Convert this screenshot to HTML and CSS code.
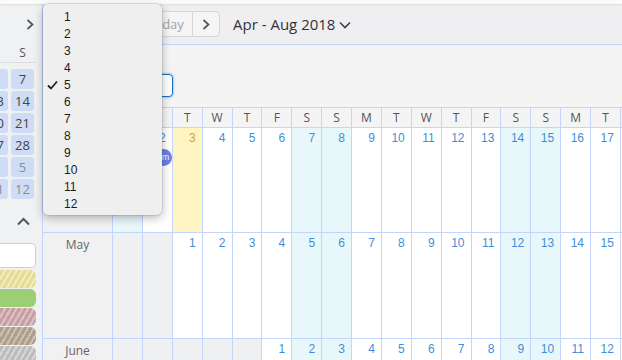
FILE: index.html
```html
<!DOCTYPE html>
<html>
<head>
<meta charset="utf-8">
<link rel="stylesheet" href="styles.css">
</head>
<body>
<div class="topstrip"></div>
<div class="app">
  <aside class="sidebar">
    <div class="mini-nav">
      <svg width="8" height="11" viewBox="0 0 8 11"><polyline points="1.5,1 6.5,5.5 1.5,10" fill="none" stroke="#555" stroke-width="1.7"/></svg>
    </div>
    <div class="mini-head"><span>F</span><span>S</span></div>
    <div class="mini-grid">
      <span class="d">6</span><span class="d">7</span>
      <span class="d">13</span><span class="d">14</span>
      <span class="d">20</span><span class="d">21</span>
      <span class="d">27</span><span class="d">28</span>
      <span class="d next">4</span><span class="d next">5</span>
      <span class="d next">11</span><span class="d next">12</span>
    </div>
    <div class="collapse">
      <svg width="13" height="9" viewBox="0 0 13 9"><polyline points="1,7.5 6.5,2 12,7.5" fill="none" stroke="#555" stroke-width="2"/></svg>
    </div>
    <div class="search"></div>
    <div class="cal-list">
      <div class="cal c-yellow"></div>
      <div class="cal c-green"></div>
      <div class="cal c-pink"></div>
      <div class="cal c-brown"></div>
      <div class="cal c-gray"></div>
    </div>
  </aside>

  <main class="main">
    <div class="toolbar">
      <div class="btn-group">
        <div class="btn prev"><svg width="8" height="11" viewBox="0 0 8 11"><polyline points="6.5,1 1.5,5.5 6.5,10" fill="none" stroke="#555" stroke-width="1.7"/></svg></div>
        <div class="btn today-btn">Today</div>
        <div class="btn next-btn"><svg width="8" height="11" viewBox="0 0 8 11"><polyline points="1.5,1 6.5,5.5 1.5,10" fill="none" stroke="#555" stroke-width="1.7"/></svg></div>
      </div>
      <div class="title">Apr - Aug 2018</div>
      <svg class="title-chev" width="12" height="8" viewBox="0 0 12 8"><polyline points="1,1.5 6,6.5 11,1.5" fill="none" stroke="#444" stroke-width="1.6"/></svg>
    </div>
    <div class="subbar">
      <div class="select"></div>
    </div>
    <div class="grid">
      <div class="h"></div>
      <div class="h">S</div><div class="h">M</div><div class="h">T</div><div class="h">W</div><div class="h">T</div><div class="h">F</div><div class="h">S</div>
      <div class="h">S</div><div class="h">M</div><div class="h">T</div><div class="h">W</div><div class="h">T</div><div class="h">F</div><div class="h">S</div>
      <div class="h">S</div><div class="h">M</div><div class="h">T</div><div class="h">W</div>

      <div class="lab">April</div>
      <div class="c we"><div class="n">1</div></div>
      <div class="c"><div class="n">2</div><div class="badge">Jm</div></div>
      <div class="c today"><div class="n">3</div></div>
      <div class="c"><div class="n">4</div></div>
      <div class="c"><div class="n">5</div></div>
      <div class="c"><div class="n">6</div></div>
      <div class="c we"><div class="n">7</div></div>
      <div class="c we"><div class="n">8</div></div>
      <div class="c"><div class="n">9</div></div>
      <div class="c"><div class="n">10</div></div>
      <div class="c"><div class="n">11</div></div>
      <div class="c"><div class="n">12</div></div>
      <div class="c"><div class="n">13</div></div>
      <div class="c we"><div class="n">14</div></div>
      <div class="c we"><div class="n">15</div></div>
      <div class="c"><div class="n">16</div></div>
      <div class="c"><div class="n">17</div></div>
      <div class="c"><div class="n">18</div></div>

      <div class="lab">May</div>
      <div class="c empty"></div>
      <div class="c empty"></div>
      <div class="c"><div class="n">1</div></div>
      <div class="c"><div class="n">2</div></div>
      <div class="c"><div class="n">3</div></div>
      <div class="c"><div class="n">4</div></div>
      <div class="c we"><div class="n">5</div></div>
      <div class="c we"><div class="n">6</div></div>
      <div class="c"><div class="n">7</div></div>
      <div class="c"><div class="n">8</div></div>
      <div class="c"><div class="n">9</div></div>
      <div class="c"><div class="n">10</div></div>
      <div class="c"><div class="n">11</div></div>
      <div class="c we"><div class="n">12</div></div>
      <div class="c we"><div class="n">13</div></div>
      <div class="c"><div class="n">14</div></div>
      <div class="c"><div class="n">15</div></div>
      <div class="c"><div class="n">16</div></div>

      <div class="lab">June</div>
      <div class="c empty"></div>
      <div class="c empty"></div>
      <div class="c empty"></div>
      <div class="c empty"></div>
      <div class="c empty"></div>
      <div class="c"><div class="n">1</div></div>
      <div class="c we"><div class="n">2</div></div>
      <div class="c we"><div class="n">3</div></div>
      <div class="c"><div class="n">4</div></div>
      <div class="c"><div class="n">5</div></div>
      <div class="c"><div class="n">6</div></div>
      <div class="c"><div class="n">7</div></div>
      <div class="c"><div class="n">8</div></div>
      <div class="c we"><div class="n">9</div></div>
      <div class="c we"><div class="n">10</div></div>
      <div class="c"><div class="n">11</div></div>
      <div class="c"><div class="n">12</div></div>
      <div class="c"><div class="n">13</div></div>
    </div>
  </main>
</div>

<div class="menu">
  <div class="item"><span class="chk"></span>1</div>
  <div class="item"><span class="chk"></span>2</div>
  <div class="item"><span class="chk"></span>3</div>
  <div class="item"><span class="chk"></span>4</div>
  <div class="item"><span class="chk"><svg width="11" height="10" viewBox="0 0 11 10"><polyline points="1,5.5 4,8.5 10,1.5" fill="none" stroke="#222" stroke-width="1.8"/></svg></span>5</div>
  <div class="item"><span class="chk"></span>6</div>
  <div class="item"><span class="chk"></span>7</div>
  <div class="item"><span class="chk"></span>8</div>
  <div class="item"><span class="chk"></span>9</div>
  <div class="item"><span class="chk"></span>10</div>
  <div class="item"><span class="chk"></span>11</div>
  <div class="item"><span class="chk"></span>12</div>
</div>
</body>
</html>
```

FILE: styles.css
```css
* { box-sizing: border-box; margin: 0; padding: 0; }
html, body { width: 622px; height: 360px; overflow: hidden; }
body {
  position: relative;
  background: #eff0f2;
  font-family: "Open Sans", sans-serif;
  color: #333;
}

.topstrip {
  position: relative;
  z-index: 1;
  height: 4px;
  background: #fbfbfb;
  box-shadow: 0 1px 2px rgba(0, 0, 0, 0.08);
}

.app { display: flex; height: 356px; }

/* ---------- sidebar ---------- */
.sidebar {
  flex: none;
  width: 43px;
  border-right: 1px solid #c3d5fc;
  background: #f0f1f3;
  overflow: hidden;
}
.mini-nav { height: 40px; display: flex; align-items: center; padding-left: 26px; }
.mini-head, .mini-grid {
  display: grid;
  grid-template-columns: 23px 23px;
  column-gap: 3px;
  width: 51px;
  margin-left: -15px;
}
.mini-head {
  height: 19px;
  border-bottom: 1px solid #dcdde0;
  font-size: 12px;
  line-height: 18px;
  text-align: center;
  color: #555;
}
.mini-grid { margin-top: 6px; row-gap: 2px; grid-auto-rows: 20px; }
.d {
  background: #cfdcf6;
  border-radius: 3px;
  font-size: 13px;
  line-height: 20px;
  text-align: center;
  color: #444;
}
.d.next { color: #8a8d93; }
.collapse { margin-top: 18px; height: 9px; padding-left: 17px; display: flex; }
.search {
  margin-top: 17px;
  margin-left: -5px;
  width: 41px;
  height: 25px;
  background: #fff;
  border: 1px solid #cfcfcf;
  border-radius: 4px;
}
.cal-list { margin-top: 2px; margin-left: -5px; width: 41px; display: flex; flex-direction: column; gap: 1px; }
.cal { height: 18px; border-radius: 6px; }
.c-yellow { background: repeating-linear-gradient(120deg, #e4dc93 0 3px, #f1ecbf 3px 5px); }
.c-green { background: #9ccf74; }
.c-pink { background: repeating-linear-gradient(120deg, #c79ea4 0 3px, #ddc1c5 3px 5px); }
.c-brown { background: repeating-linear-gradient(120deg, #ad9f8b 0 3px, #cbc1b3 3px 5px); }
.c-gray { background: repeating-linear-gradient(120deg, #bcbcbc 0 3px, #d7d7d7 3px 5px); }

/* ---------- main ---------- */
.main {
  flex: 1;
  min-width: 0;
  overflow: hidden;
  display: flex;
  flex-direction: column;
}
.toolbar {
  flex: none;
  height: 41px;
  border-bottom: 1px solid #c3d5fc;
  background: #efeff1;
  display: flex;
  align-items: center;
}
.btn-group { display: flex; margin-left: 69px; }
.btn {
  height: 26px;
  border: 1px solid #d6d6d6;
  background: #f5f5f6;
  display: flex;
  align-items: center;
  justify-content: center;
}
.prev { width: 27px; border-radius: 4px 0 0 4px; }
.today-btn {
  width: 55px;
  margin-left: -1px;
  font-size: 13px;
  color: #a2a2a2;
}
.next-btn { width: 28px; margin-left: -1px; border-radius: 0 4px 4px 0; }
.title { margin-left: 13px; font-size: 15px; color: #333; }
.title-chev { margin-left: 4px; margin-top: 1px; }

.subbar {
  flex: none;
  height: 62px;
  background: #f4f4f4;
  padding-top: 29px;
}
.select {
  margin-left: 19px;
  width: 111px;
  height: 23px;
  background: #fff;
  border: 1px solid #1f6fbf;
  border-radius: 4px;
  box-shadow: 0 0 2px 1px rgba(80, 150, 230, 0.45);
}

.grid {
  flex: none;
  display: grid;
  grid-template-columns: 69px repeat(18, 28.88px);
  grid-template-rows: 19px 104px 105px 105px;
  gap: 1px;
  padding-top: 1px;
  background: #c3d5fc;
  width: 620px;
}
.h {
  background: #f4f4f4;
  font-size: 12px;
  line-height: 19px;
  text-align: center;
  color: #555;
}
.lab {
  background: #f1f1f2;
  font-size: 12px;
  line-height: 16px;
  padding-top: 4px;
  text-align: center;
  color: #666;
}
.c { background: #fff; display: flex; flex-direction: column; align-items: flex-end; }
.c.we { background: #e8f8fa; }
.c.today { background: #fff5c2; }
.c.empty { background: #eff0f2; }
.n {
  font-family: "Liberation Sans", Arial, sans-serif;
  font-size: 12px;
  line-height: 14px;
  padding: 3px 6px 0 0;
  color: #3f8fd8;
}
.today .n { color: #d9a41e; }
.badge {
  margin-top: 4px;
  width: 17px;
  height: 17px;
  border-radius: 50%;
  background: #6b7fe6;
  color: #fff;
  font-family: "Liberation Sans", Arial, sans-serif;
  font-size: 9px;
  line-height: 17px;
  text-align: center;
}

/* ---------- popup menu ---------- */
.menu {
  position: absolute;
  left: 43px;
  top: 4px;
  width: 119px;
  height: 211px;
  padding-top: 4px;
  background: #efefef;
  border-radius: 5px;
  box-shadow: 0 3px 10px rgba(0, 0, 0, 0.28), 0 0 0 0.5px rgba(0, 0, 0, 0.18);
  z-index: 5;
}
.item {
  display: flex;
  align-items: center;
  height: 17px;
  font-family: "Liberation Sans", Arial, sans-serif;
  font-size: 12px;
  color: #1c1c1c;
}
.chk { width: 21px; flex: none; display: flex; padding-left: 4px; }
```
